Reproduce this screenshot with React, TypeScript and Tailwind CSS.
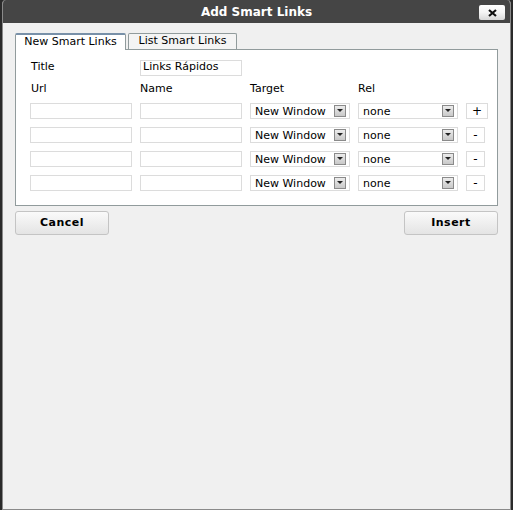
import React from "react";

const font = { fontFamily: '"DejaVu Sans", Verdana, sans-serif' };

function Select({ value, w }: { value: string; w: string }) {
  return (
    <div className={`flex items-center justify-between h-[16px] ${w} border border-[#dcdcdc] bg-white pl-[4px] pr-[3px]`}>
      <span className="text-[11px] leading-none text-black">{value}</span>
      <span className="flex items-center justify-center w-[12px] h-[12px] border border-[#8a8a8a] bg-gradient-to-b from-[#ececec] to-[#c8c8c8]">
        <svg width="6" height="4" viewBox="0 0 6 4"><path d="M0 0h6L3 3z" fill="#222" /></svg>
      </span>
    </div>
  );
}

function Row({ first }: { first: boolean }) {
  return (
    <div className="flex items-center h-[16px]">
      <div className="w-[102px] h-[16px] border border-[#dcdcdc] bg-white" />
      <div className="w-[102px] h-[16px] border border-[#dcdcdc] bg-white ml-[8px]" />
      <div className="ml-[8px]"><Select value="New Window" w="w-[100px]" /></div>
      <div className="ml-[8px]"><Select value="none" w="w-[100px]" /></div>
      <div className={`ml-[8px] h-[16px] ${first ? "w-[22px]" : "w-[19px]"} border border-[#dcdcdc] bg-white flex items-center justify-center text-[12px] leading-none text-black`}>
        {first ? "+" : "-"}
      </div>
    </div>
  );
}

export default function App() {
  return (
    <div className="w-[513px] h-[510px] bg-[#2a2a2a] px-[2px]" style={font}>
      <div className="w-[509px] h-[510px] flex flex-col bg-[#f0f0f0] border-l border-r border-b border-[#8a8a8a] rounded-t-[4px] overflow-hidden">
        <div className="h-[23px] bg-[#454545] flex items-center justify-center relative shrink-0">
          <span className="text-white text-[12px] font-bold">Add Smart Links</span>
          <div className="absolute right-[5px] top-[5px] w-[26px] h-[15px] bg-gradient-to-b from-white via-[#f4f4f4] to-[#d8d8d8] rounded-[2px] flex items-center justify-center">
            <svg width="9" height="8" viewBox="0 0 9 8"><path d="M1 1l7 6M8 1L1 7" stroke="#111" strokeWidth="2.2" /></svg>
          </div>
        </div>
        <div className="pl-[12px] pr-[12px] pt-[9px]">
          <div className="flex items-end h-[17px]">
            <div className="h-[17px] w-[111px] bg-white border border-b-0 border-[#919b9c] border-t-2 border-t-[#7890a8] rounded-t-[2px] flex items-center justify-center text-[11px] text-black relative top-[1px]">
              New Smart Links
            </div>
            <div className="ml-[2px] h-[16px] w-[109px] bg-[#f4f4f4] border border-b-0 border-[#919b9c] rounded-t-[2px] flex items-center justify-center text-[11px] text-black">
              List Smart Links
            </div>
          </div>
          <div className="h-[157px] bg-white border border-[#919b9c] pl-[14px] pt-[9px]">
            <div className="flex items-center h-[17px]">
              <span className="w-[110px] text-[11px] text-black pl-[1px]">Title</span>
              <div className="w-[102px] h-[16px] border border-[#dcdcdc] bg-white flex items-center pl-[2px] text-[11px] text-black">Links Rápidos</div>
            </div>
            <div className="flex items-center h-[13px] mt-[7px] text-[11px] text-black">
              <span className="w-[110px] pl-[1px]">Url</span>
              <span className="w-[110px]">Name</span>
              <span className="w-[108px]">Target</span>
              <span>Rel</span>
            </div>
            <div className="flex flex-col gap-[8px] mt-[7px]">
              <Row first />
              <Row first={false} />
              <Row first={false} />
              <Row first={false} />
            </div>
          </div>
          <div className="flex justify-between mt-[5px]">
            <button className="w-[94px] h-[24px] border border-[#c4c4c4] rounded-[3px] bg-gradient-to-b from-[#fafafa] to-[#e4e4e4] text-[11px] font-bold text-black tracking-[0.5px]">Cancel</button>
            <button className="w-[94px] h-[24px] border border-[#c4c4c4] rounded-[3px] bg-gradient-to-b from-[#fafafa] to-[#e4e4e4] text-[11px] font-bold text-black tracking-[0.5px]">Insert</button>
          </div>
        </div>
      </div>
    </div>
  );
}
